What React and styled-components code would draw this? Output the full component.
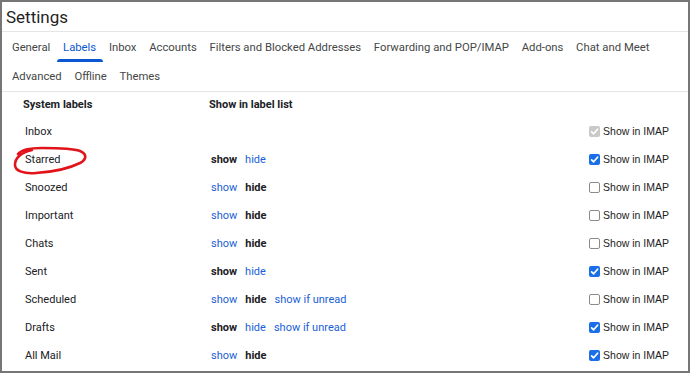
import styled, { createGlobalStyle } from 'styled-components';

const GlobalStyle = createGlobalStyle`
  html, body { margin: 0; padding: 0; background: #fff; }
  body { font-family: Roboto, 'Liberation Sans', Arial, sans-serif; }
`;

const Frame = styled.div`
  position: relative;
  width: 690px;
  height: 373px;
  box-sizing: border-box;
  border: 2px solid #767676;
  background: #fff;
  overflow: hidden;
  color: #202124;
`;

const TitleBar = styled.div`
  height: 29px;
  padding-left: 4px;
  display: flex;
  align-items: center;
  border-bottom: 1px solid #e6e6e6;
  font-size: 17px;
  color: #1f1f1f;
`;

const Tabs = styled.nav`
  padding-left: 3.6px;
  border-bottom: 1px solid #e6e6e6;
`;

const TabRow = styled.div`
  display: flex;
  height: ${(p) => p.$h}px;
`;

const Tab = styled.div`
  position: relative;
  flex: none;
  white-space: nowrap;
  padding: 0 6.35px;
  display: flex;
  align-items: center;
  font-size: 11.3px;
  color: ${(p) => (p.$active ? '#0b57d0' : '#444746')};
  &::after {
    content: '';
    display: ${(p) => (p.$active ? 'block' : 'none')};
    position: absolute;
    left: 0;
    right: 0;
    bottom: 0;
    height: 3px;
    border-radius: 3px 3px 0 0;
    background: #0b57d0;
  }
`;

const Table = styled.div`
  padding: 0 19px 0 23px;
`;

const Row = styled.div`
  display: grid;
  grid-template-columns: 186px 1fr auto;
  align-items: center;
  height: ${(p) => p.$h}px;
  font-size: 11px;
`;

const HeadCell = styled.div`
  font-weight: 700;
  margin-left: -2px;
`;

const Options = styled.div`
  display: flex;
  gap: 8px;
`;

const Option = styled.span`
  color: ${(p) => (p.$on ? '#202124' : '#1a5fd6')};
  font-weight: ${(p) => (p.$on ? 700 : 400)};
`;

const Imap = styled.label`
  display: flex;
  align-items: center;
  gap: 3px;
  font-family: 'Liberation Sans', Arial, sans-serif;
  font-size: 10.5px;
  color: #222;
`;

const Box = styled.span`
  width: 11px;
  height: 11px;
  box-sizing: border-box;
  border-radius: 2px;
  display: flex;
  align-items: center;
  justify-content: center;
  background: ${(p) => (p.$disabled ? '#c9c9c9' : p.$checked ? '#1a6fe8' : '#fff')};
  border: ${(p) => (p.$checked ? 'none' : '1px solid #8b8b8b')};
`;

const Scribble = styled.svg`
  position: absolute;
  left: 8px;
  top: 142px;
  pointer-events: none;
`;

const Checkbox = ({ checked, disabled }) => (
  <Box $checked={checked} $disabled={disabled}>
    {checked && (
      <svg width="9" height="9" viewBox="0 0 9 9">
        <path d="M1.6 4.8 L3.6 6.8 L7.6 2.2" fill="none" stroke="#fff" strokeWidth="1.7" strokeLinecap="round" strokeLinejoin="round" />
      </svg>
    )}
  </Box>
);

const labels = [
  { name: 'Inbox', show: null, imap: true, disabled: true },
  { name: 'Starred', show: true, imap: true },
  { name: 'Snoozed', show: false, imap: false },
  { name: 'Important', show: false, imap: false },
  { name: 'Chats', show: false, imap: false },
  { name: 'Sent', show: true, imap: true },
  { name: 'Scheduled', show: false, unread: true, imap: false },
  { name: 'Drafts', show: true, unread: true, imap: true },
  { name: 'All Mail', show: false, imap: true },
];

export default function App() {
  return (
    <>
      <GlobalStyle />
      <Frame>
        <TitleBar>Settings</TitleBar>
        <Tabs>
          <TabRow $h={30}>
            <Tab>General</Tab>
            <Tab $active>Labels</Tab>
            <Tab>Inbox</Tab>
            <Tab>Accounts</Tab>
            <Tab>Filters and Blocked Addresses</Tab>
            <Tab>Forwarding and POP/IMAP</Tab>
            <Tab>Add-ons</Tab>
            <Tab>Chat and Meet</Tab>
          </TabRow>
          <TabRow $h={29}>
            <Tab>Advanced</Tab>
            <Tab>Offline</Tab>
            <Tab>Themes</Tab>
          </TabRow>
        </Tabs>
        <Table>
          <Row $h={25}>
            <HeadCell>System labels</HeadCell>
            <HeadCell>Show in label list</HeadCell>
            <span />
          </Row>
          {labels.map((l) => (
            <Row key={l.name} $h={28}>
              <span>{l.name}</span>
              <Options>
                {l.show !== null && (
                  <>
                    <Option $on={l.show}>show</Option>
                    <Option $on={!l.show}>hide</Option>
                    {l.unread && <Option>show if unread</Option>}
                  </>
                )}
              </Options>
              <Imap>
                <Checkbox checked={l.imap} disabled={l.disabled} />
                Show in IMAP
              </Imap>
            </Row>
          ))}
        </Table>
        <Scribble width="80" height="34" viewBox="0 0 80 34">
          <path
            d="M8 10 C12 5, 22 4, 32 4 C47 4, 62 4, 70 7 C77 10, 77 15, 70 19 C60 24, 42 28, 26 29 C14 30, 5 27, 5 21 C5 15, 10 9, 22 6"
            fill="none"
            stroke="#e0141a"
            strokeWidth="2.6"
            strokeLinecap="round"
          />
        </Scribble>
      </Frame>
    </>
  );
}
